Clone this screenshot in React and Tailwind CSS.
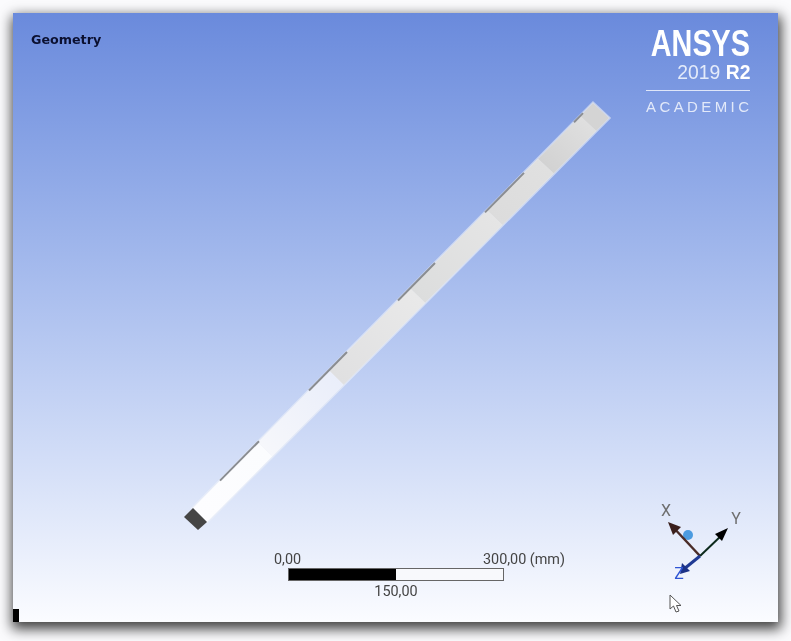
// beam corners in screenshot coordinates: A-B upper edge, C-D lower edge
const A = [193, 508];
const B = [593, 103];
const C = [207, 522];
const D = [609, 118];

function pt(t, s) {
  const ux = A[0] + (B[0] - A[0]) * t;
  const uy = A[1] + (B[1] - A[1]) * t;
  const lx = C[0] + (D[0] - C[0]) * t;
  const ly = C[1] + (D[1] - C[1]) * t;
  return [ux + (lx - ux) * s, uy + (ly - uy) * s];
}

// grey lines along the upper edge
const edgeLines = [
  [0.0675, 0.165],
  [0.29, 0.385],
  [0.5125, 0.605],
  [0.73, 0.8275],
  [0.9525, 0.975],
];

// each body shades from darker at its lower end to lighter at its upper end
const bands = [
  [0, 0.1625, "#fdfdff", "#fbfcfe"],
  [0.1625, 0.34, "#f6f7fb", "#eaeefa"],
  [0.34, 0.5425, "#e0e0e1", "#e9e9e9"],
  [0.5425, 0.735, "#dcdddd", "#e5e5e5"],
  [0.735, 0.8625, "#dcdcdc", "#e0e0e0"],
  [0.8625, 0.968, "#d2d2d2", "#dfdfdf"],
  [0.968, 1, "#d4d4d4", "#d4d4d4"],
];

function Beam() {
  return (
    <svg className="absolute inset-0 w-full h-full" viewBox="13 13 765 609">
      <defs>
        {bands.map(([t0, t1, c0, c1], i) => {
          const [x1, y1] = pt(t0, 0);
          const [x2, y2] = pt(t1, 0);
          return (
            <linearGradient key={i} id={`band${i}`} gradientUnits="userSpaceOnUse" x1={x1} y1={y1} x2={x2} y2={y2}>
              <stop offset="0" stopColor={c0} />
              <stop offset="1" stopColor={c1} />
            </linearGradient>
          );
        })}
      </defs>
      {/* pale halo round the whole body */}
      <polygon
        points={[A, B, D, C].map((p) => p.join(",")).join(" ")}
        fill="#eef1f8"
        stroke="#eef1f8"
        strokeOpacity="0.6"
        strokeWidth="3"
      />
      {bands.map(([t0, t1], i) => (
        <polygon
          key={i}
          points={[pt(t0, 0), pt(t1, 0), pt(t1, 1), pt(t0, 1)].map((p) => p.join(",")).join(" ")}
          fill={`url(#band${i})`}
        />
      ))}
      {edgeLines.map(([a, b]) => {
        const [x1, y1] = pt(a, 0);
        const [x2, y2] = pt(b, 0);
        return <line key={a} x1={x1} y1={y1} x2={x2} y2={y2} stroke="#8a8d92" strokeWidth="2" />;
      })}
      <polygon points="193,508 184,517 198,530 207,522" fill="#454545" />
    </svg>
  );
}

function Triad() {
  return (
    <svg className="w-[90px] h-[120px]" viewBox="655 500 90 120">
      <text x="666" y="516" fontSize="16" fill="#6e6e6e" textAnchor="middle" fontFamily="Roboto, sans-serif">X</text>
      <text x="736" y="524" fontSize="16" fill="#6e6e6e" textAnchor="middle" fontFamily="Roboto, sans-serif">Y</text>
      <circle cx="688" cy="535" r="5" fill="#4b9be0" />
      <line x1="700" y1="556" x2="672" y2="526" stroke="#4a2c28" strokeWidth="2.5" />
      <polygon points="668,522 681,527 673,535" fill="#3a1f1c" />
      <line x1="700" y1="556" x2="723" y2="534" stroke="#0c2a1c" strokeWidth="2" />
      <polygon points="728,528 722,541 715,534" fill="#000" />
      <line x1="700" y1="556" x2="684" y2="569" stroke="#1f3a94" strokeWidth="3" />
      <polygon points="680,574 682,563 690,571" fill="#1c3287" />
      <text x="679" y="579" fontSize="16" fill="#2f55d4" textAnchor="middle" fontFamily="Roboto, sans-serif">Z</text>
      <path d="M670 595 V609 L673.500 606 L676 612 L679 611 L676.500 605.500 H681 Z" fill="#fff" stroke="#555" strokeWidth="1" />
    </svg>
  );
}

function ScaleBar() {
  return (
    <div className="w-[291px] text-[14.4px] leading-none text-[#444]" style={{ fontFamily: "Roboto, sans-serif" }}>
      <div className="flex justify-between">
        <span>0,00</span>
        <span>300,00 (mm)</span>
      </div>
      <div className="ml-[14px] w-[216px] h-[13px] flex border border-[#666] bg-[#f8f9fc]">
        <div className="w-1/2 bg-black" />
      </div>
      <div className="ml-[14px] w-[216px] mt-[4px] text-center">150,00</div>
    </div>
  );
}

export default function App() {
  return (
    <div className="w-[791px] h-[641px] bg-[#fbfbfd] pt-[13px] pl-[13px] pr-[13px] pb-[19px] overflow-hidden">
      <div className="relative w-full h-full flex flex-col bg-gradient-to-b from-[#6a8adc] to-[#fbfcff] shadow-[1px_5px_12px_2px_rgba(0,0,0,0.75)] blur-[0.4px]">
        <Beam />
        <div className="relative flex justify-between pl-[18px] pr-[28px] pt-[18px]">
          <div className="text-[12.7px] font-bold text-[#0b1030] leading-[18px]" style={{ fontFamily: "'DejaVu Sans', sans-serif" }}>
            Geometry
          </div>
          <div className="w-[104px] -mt-[3px] text-white" style={{ fontFamily: "'Liberation Sans', sans-serif" }}>
            <div className="flex justify-end">
              <div className="shrink-0 text-[36px] font-bold leading-[32px] scale-x-[0.8] origin-right">ANSYS</div>
            </div>
            <div className="flex justify-end">
              <div className="shrink-0 text-[21px] leading-[23px] text-[#e4ebfa] scale-x-[0.92] origin-right">
                2019 <span className="font-bold text-white">R2</span>
              </div>
            </div>
            <div className="h-px bg-[#dfe6f8] mt-[7px]" />
            <div className="mt-[7px] text-[15px] leading-[17px] tracking-[3.4px] text-[#e2e9f9] whitespace-nowrap">ACADEMIC</div>
          </div>
        </div>
        <div className="relative mt-auto flex items-end">
          <div className="w-[6px] h-[13px] bg-black" />
          <div className="ml-[255px] mb-[23px]">
            <ScaleBar />
          </div>
          <div className="ml-[90px] mb-[2px]">
            <Triad />
          </div>
        </div>
      </div>
    </div>
  );
}
